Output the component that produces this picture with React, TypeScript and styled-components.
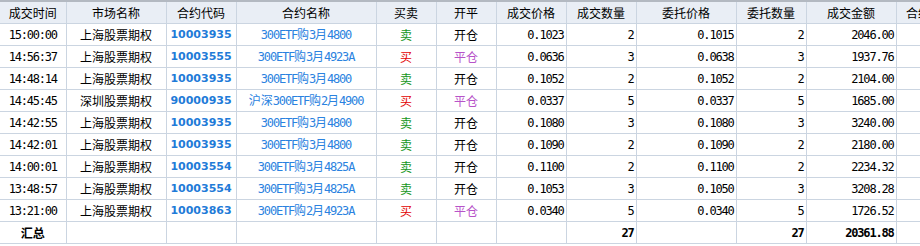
import React from "react";
import styled, { createGlobalStyle } from "styled-components";

type Side = "buy" | "sell";
type Open = "open" | "close";

interface Trade {
  time: string;
  market: string;
  code: string;
  name: string;
  side: Side;
  oc: Open;
  price: string;
  qty: number;
  orderPrice: string;
  orderQty: number;
  amount: string;
  fee: string;
}

const trades: Trade[] = [
  { time: "15:00:00", market: "上海股票期权", code: "10003935", name: "300ETF购3月4800", side: "sell", oc: "open", price: "0.1023", qty: 2, orderPrice: "0.1015", orderQty: 2, amount: "2046.00", fee: "-3.40" },
  { time: "14:56:37", market: "上海股票期权", code: "10003555", name: "300ETF购3月4923A", side: "buy", oc: "close", price: "0.0636", qty: 3, orderPrice: "0.0638", orderQty: 3, amount: "1937.76", fee: "-5.10" },
  { time: "14:48:14", market: "上海股票期权", code: "10003935", name: "300ETF购3月4800", side: "sell", oc: "open", price: "0.1052", qty: 2, orderPrice: "0.1052", orderQty: 2, amount: "2104.00", fee: "-3.40" },
  { time: "14:45:45", market: "深圳股票期权", code: "90000935", name: "沪深300ETF购2月4900", side: "buy", oc: "close", price: "0.0337", qty: 5, orderPrice: "0.0337", orderQty: 5, amount: "1685.00", fee: "-8.50" },
  { time: "14:42:55", market: "上海股票期权", code: "10003935", name: "300ETF购3月4800", side: "sell", oc: "open", price: "0.1080", qty: 3, orderPrice: "0.1080", orderQty: 3, amount: "3240.00", fee: "-5.10" },
  { time: "14:42:01", market: "上海股票期权", code: "10003935", name: "300ETF购3月4800", side: "sell", oc: "open", price: "0.1090", qty: 2, orderPrice: "0.1090", orderQty: 2, amount: "2180.00", fee: "-3.40" },
  { time: "14:00:01", market: "上海股票期权", code: "10003554", name: "300ETF购3月4825A", side: "sell", oc: "open", price: "0.1100", qty: 2, orderPrice: "0.1100", orderQty: 2, amount: "2234.32", fee: "-3.40" },
  { time: "13:48:57", market: "上海股票期权", code: "10003554", name: "300ETF购3月4825A", side: "sell", oc: "open", price: "0.1053", qty: 3, orderPrice: "0.1050", orderQty: 3, amount: "3208.28", fee: "-5.10" },
  { time: "13:21:00", market: "上海股票期权", code: "10003863", name: "300ETF购2月4923A", side: "buy", oc: "close", price: "0.0340", qty: 5, orderPrice: "0.0340", orderQty: 5, amount: "1726.52", fee: "-8.50" },
];

const widths = [66, 100, 70, 140, 60, 60, 70, 70, 100, 70, 90, 80];

const headers = [
  "成交时间", "市场名称", "合约代码", "合约名称", "买卖", "开平",
  "成交价格", "成交数量", "委托价格", "委托数量", "成交金额", "合约手续费",
];

const GlobalStyle = createGlobalStyle`
  html, body {
    margin: 0;
    padding: 0;
    background: #ffffff;
    overflow: hidden;
  }
`;

const Page = styled.div`
  width: 920px;
  height: 246px;
  overflow: hidden;
  background: #fff;
`;

const Table = styled.table`
  border-collapse: collapse;
  table-layout: fixed;
  width: ${widths.reduce((a, b) => a + b, 0)}px;
  font-family: "Noto Sans CJK SC", "Liberation Sans", sans-serif;
  font-size: 12px;
  color: #000;
`;

const HeadRow = styled.tr`
  background: #e9eef5;
  border-top: 2px solid #b3b9c1;
`;

const HeadCell = styled.th`
  padding: 0;
  font-weight: normal;
  color: #222;
  border-right: 1px solid #cbd5e1;
  border-bottom: 1px solid #cbd5e1;
`;

const Row = styled.tr``;

type Align = "left" | "center" | "right";
type Tone = "plain" | "code" | "link" | "sell" | "buy" | "close" | "fee";

const toneColor: Record<Tone, string> = {
  plain: "#000",
  code: "#1f7bd8",
  link: "#2a82e0",
  sell: "#15961a",
  buy: "#e30000",
  close: "#b753c9",
  fee: "#e30000",
};

const justify: Record<Align, string> = {
  left: "flex-start",
  center: "center",
  right: "flex-end",
};

const Cell = styled.td`
  padding: 0;
  border-right: 1px solid #cbd5e1;
  border-bottom: 1px solid #cbd5e1;
`;

const mono = `
  font-family: "DejaVu Sans Mono", "Noto Sans CJK SC", monospace;
  font-size: 12px;
  letter-spacing: -1.2px;
`;

// fixed-height box inside each cell so mixed fonts can't grow the row
const Box = styled.div<{ $align?: Align; $tone?: Tone; $mono?: boolean; $bold?: boolean }>`
  display: flex;
  align-items: center;
  justify-content: ${(p) => justify[p.$align ?? "center"]};
  height: 21px;
  padding: 0 ${(p) => (p.$mono && p.$align === "right" ? 2 : 3)}px 0 3px;
  overflow: hidden;
  white-space: nowrap;
  line-height: 14px;
  color: ${(p) => toneColor[p.$tone ?? "plain"]};
  font-weight: ${(p) => (p.$bold ? "bold" : "normal")};
  ${(p) => p.$mono && mono}
`;

const Code = styled.span`
  font-family: "DejaVu Sans", "Liberation Sans", sans-serif;
  font-weight: bold;
  font-size: 11px;
`;

const Name = styled.span`
  ${mono}
  & > b {
    font-weight: normal;
    font-family: "Noto Sans CJK SC", sans-serif;
    letter-spacing: 0;
  }
`;

// split CJK from latin so latin gets the narrow mono face
const renderName = (s: string) =>
  s.split(/([\u4e00-\u9fa5]+)/).map((part, i) =>
    /[\u4e00-\u9fa5]/.test(part) ? <b key={i}>{part}</b> : <React.Fragment key={i}>{part}</React.Fragment>
  );

export default function App() {
  const totalQty = trades.reduce((a, t) => a + t.qty, 0);
  const totalOrder = trades.reduce((a, t) => a + t.orderQty, 0);
  return (
    <Page>
      <GlobalStyle />
      <Table>
        <colgroup>
          {widths.map((w, i) => (
            <col key={i} style={{ width: w }} />
          ))}
        </colgroup>
        <thead>
          <HeadRow>
            {headers.map((h) => (
              <HeadCell key={h}>
                <Box>{h}</Box>
              </HeadCell>
            ))}
          </HeadRow>
        </thead>
        <tbody>
          {trades.map((t, i) => (
            <Row key={i}>
              <Cell><Box $mono>{t.time}</Box></Cell>
              <Cell><Box>{t.market}</Box></Cell>
              <Cell>
                <Box $tone="code"><Code>{t.code}</Code></Box>
              </Cell>
              <Cell>
                <Box $tone="link"><Name>{renderName(t.name)}</Name></Box>
              </Cell>
              <Cell><Box $tone={t.side}>{t.side === "sell" ? "卖" : "买"}</Box></Cell>
              <Cell>
                <Box $tone={t.oc === "close" ? "close" : "plain"}>{t.oc === "open" ? "开仓" : "平仓"}</Box>
              </Cell>
              <Cell><Box $align="right" $mono>{t.price}</Box></Cell>
              <Cell><Box $align="right" $mono>{t.qty}</Box></Cell>
              <Cell><Box $align="right" $mono>{t.orderPrice}</Box></Cell>
              <Cell><Box $align="right" $mono>{t.orderQty}</Box></Cell>
              <Cell><Box $align="right" $mono>{t.amount}</Box></Cell>
              <Cell><Box $tone="fee" $mono>{t.fee}</Box></Cell>
            </Row>
          ))}
          <Row>
            <Cell><Box $bold>汇总</Box></Cell>
            <Cell><Box /></Cell>
            <Cell><Box /></Cell>
            <Cell><Box /></Cell>
            <Cell><Box /></Cell>
            <Cell><Box /></Cell>
            <Cell><Box /></Cell>
            <Cell><Box $align="right" $mono $bold>{totalQty}</Box></Cell>
            <Cell><Box /></Cell>
            <Cell><Box $align="right" $mono $bold>{totalOrder}</Box></Cell>
            <Cell><Box $align="right" $mono $bold>20361.88</Box></Cell>
            <Cell><Box /></Cell>
          </Row>
        </tbody>
      </Table>
    </Page>
  );
}
